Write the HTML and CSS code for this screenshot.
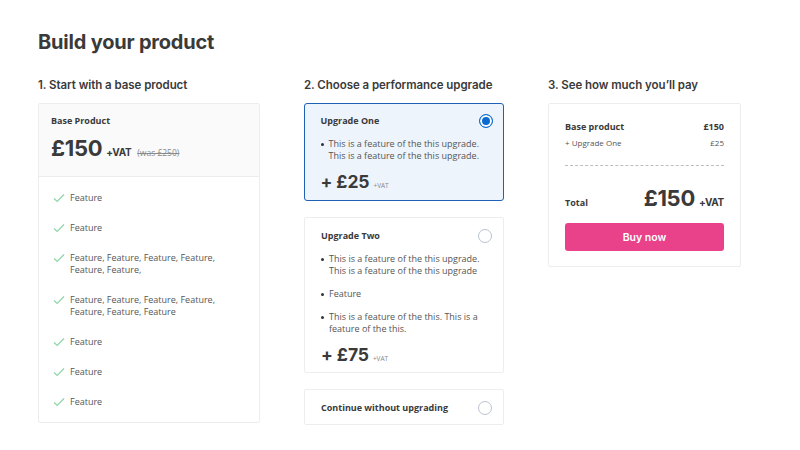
FILE: index.html
```html
<!DOCTYPE html>
<html lang="en">
<head>
<meta charset="utf-8">
<title>Build your product</title>
<link rel="stylesheet" href="styles.css">
</head>
<body>
<main class="page">
  <h1 class="title">Build your product</h1>
  <div class="columns">
    <section class="col">
      <h2 class="step">1. Start with a base product</h2>
      <div class="card base">
        <div class="base-head">
          <div class="label">Base Product</div>
          <div class="price-row">
            <span class="price-big">£150</span>
            <span class="vat">+VAT</span>
            <span class="was">(was £250)</span>
          </div>
        </div>
        <ul class="features">
          <li><svg class="check" viewBox="0 0 12 10" width="12" height="10"><polyline points="1,5.5 4.2,8.5 11,1.5" fill="none" stroke="#8fd4a8" stroke-width="1.2"/></svg><span>Feature</span></li>
          <li><svg class="check" viewBox="0 0 12 10" width="12" height="10"><polyline points="1,5.5 4.2,8.5 11,1.5" fill="none" stroke="#8fd4a8" stroke-width="1.2"/></svg><span>Feature</span></li>
          <li><svg class="check" viewBox="0 0 12 10" width="12" height="10"><polyline points="1,5.5 4.2,8.5 11,1.5" fill="none" stroke="#8fd4a8" stroke-width="1.2"/></svg><span>Feature, Feature, Feature, Feature,<br>Feature, Feature,</span></li>
          <li><svg class="check" viewBox="0 0 12 10" width="12" height="10"><polyline points="1,5.5 4.2,8.5 11,1.5" fill="none" stroke="#8fd4a8" stroke-width="1.2"/></svg><span>Feature, Feature, Feature, Feature,<br>Feature, Feature, Feature</span></li>
          <li><svg class="check" viewBox="0 0 12 10" width="12" height="10"><polyline points="1,5.5 4.2,8.5 11,1.5" fill="none" stroke="#8fd4a8" stroke-width="1.2"/></svg><span>Feature</span></li>
          <li><svg class="check" viewBox="0 0 12 10" width="12" height="10"><polyline points="1,5.5 4.2,8.5 11,1.5" fill="none" stroke="#8fd4a8" stroke-width="1.2"/></svg><span>Feature</span></li>
          <li><svg class="check" viewBox="0 0 12 10" width="12" height="10"><polyline points="1,5.5 4.2,8.5 11,1.5" fill="none" stroke="#8fd4a8" stroke-width="1.2"/></svg><span>Feature</span></li>
        </ul>
      </div>
    </section>

    <section class="col">
      <h2 class="step">2. Choose a performance upgrade</h2>
      <div class="options">
        <div class="card option selected">
          <div class="opt-head">
            <span class="label">Upgrade One</span>
            <span class="radio on"></span>
          </div>
          <ul class="bullets">
            <li>This is a feature of the this upgrade.<br>This is a feature of the this upgrade.</li>
          </ul>
          <div class="opt-price"><span class="plus-price">+ £25</span><span class="small-vat">+VAT</span></div>
        </div>
        <div class="card option">
          <div class="opt-head">
            <span class="label">Upgrade Two</span>
            <span class="radio"></span>
          </div>
          <ul class="bullets">
            <li>This is a feature of the this upgrade.<br>This is a feature of the this upgrade</li>
            <li>Feature</li>
            <li>This is a feature of the this. This is a<br>feature of the this.</li>
          </ul>
          <div class="opt-price"><span class="plus-price">+ £75</span><span class="small-vat">+VAT</span></div>
        </div>
        <div class="card option none">
          <div class="opt-head">
            <span class="label">Continue without upgrading</span>
            <span class="radio"></span>
          </div>
        </div>
      </div>
    </section>

    <section class="col">
      <h2 class="step">3. See how much you’ll pay</h2>
      <div class="card summary">
        <div class="line strong"><span>Base product</span><span>£150</span></div>
        <div class="line sub"><span>+ Upgrade One</span><span>£25</span></div>
        <div class="dash"></div>
        <div class="total">
          <span class="total-label">Total</span>
          <span class="total-price"><span class="price-big">£150</span><span class="vat">+VAT</span></span>
        </div>
        <button class="buy">Buy now</button>
      </div>
    </section>
  </div>
</main>
</body>
</html>
```

FILE: styles.css
```css
* { box-sizing: border-box; }
html, body { margin: 0; padding: 0; background: #ffffff; }
body {
  font-family: "Open Sans", "Noto Sans", sans-serif;
  color: #3b3b3b;
}
.page { padding: 28px 0 0 38px; width: 800px; }
.title {
  font-family: Inter, "Noto Sans", sans-serif;
  font-weight: 700;
  font-size: 20px;
  line-height: 28px;
  letter-spacing: -0.2px;
  color: #3a3a3a;
  margin: 0 0 22px 0;
}
.columns {
  display: grid;
  grid-template-columns: 222px 200px 193px;
  column-gap: 44px;
  align-items: start;
}
.step {
  font-family: Inter, "Noto Sans", sans-serif;
  font-weight: 600;
  font-size: 11.5px;
  line-height: 14px;
  letter-spacing: -0.05px;
  color: #3a3a3a;
  margin: 0 0 11px 0;
}
.card {
  border: 1px solid #ededed;
  border-radius: 2px;
  background: #fff;
}
.label {
  font-weight: 700;
  font-size: 9px;
  line-height: 12px;
  color: #3a3a3a;
}
.base-head {
  background: #fafafa;
  border-bottom: 1px solid #ececec;
  padding: 11px 12px 0 12px;
  height: 73px;
}
.price-row { display: flex; align-items: baseline; margin-top: 7px; }
.price-big {
  font-family: Inter, "Noto Sans", sans-serif;
  font-weight: 700;
  font-size: 22px;
  line-height: 28px;
  letter-spacing: -0.3px;
  color: #3a3a3a;
}
.vat {
  font-family: Inter, "Noto Sans", sans-serif;
  font-weight: 700;
  font-size: 10px;
  margin-left: 4px;
  color: #3a3a3a;
  letter-spacing: -0.3px;
}
.was {
  font-size: 8.5px;
  color: #8a8a8a;
  text-decoration: line-through;
  margin-left: 6px;
}
.features {
  list-style: none;
  margin: 0;
  padding: 15px 12px 14px 14px;
  display: flex;
  flex-direction: column;
  gap: 18px;
}
.features li {
  display: flex;
  align-items: flex-start;
  font-size: 9px;
  line-height: 12px;
  color: #555;
}
.check { flex: none; margin: 1px 5px 0 0; }
.options { display: flex; flex-direction: column; gap: 16px; }
.option { padding: 10px 11px 6px 16px; }
.option.selected {
  border: 1.5px solid #1f62b5;
  border-radius: 3px;
  background: #edf4fc;
  padding: 9px 10px 7px 15.5px;
}
.opt-head {
  display: flex;
  justify-content: space-between;
  align-items: center;
  height: 16px;
}
.radio {
  width: 14px;
  height: 14px;
  border-radius: 50%;
  border: 1px solid #b9c3d0;
  background: #fff;
  flex: none;
}
.radio.on {
  border: 1.5px solid #0b6bd3;
  background: #0b6bd3;
  box-shadow: inset 0 0 0 2px #fff;
}
.bullets {
  list-style: none;
  margin: 9px 0 0 0;
  padding: 0;
  display: flex;
  flex-direction: column;
  gap: 11px;
}
.bullets li {
  position: relative;
  padding-left: 8px;
  font-size: 9px;
  line-height: 12px;
  color: #555;
}
.bullets li::before {
  content: "";
  position: absolute;
  left: 0;
  top: 5px;
  width: 3px;
  height: 3px;
  border-radius: 50%;
  background: #333;
}
.opt-price { display: flex; align-items: baseline; margin-top: 9px; }
.plus-price {
  font-family: Inter, "Noto Sans", sans-serif;
  font-weight: 700;
  font-size: 17.5px;
  line-height: 22px;
  letter-spacing: -0.1px;
  color: #3a3a3a;
}
.small-vat { font-size: 6.5px; color: #888; margin-left: 4px; }
.option.none { padding: 10px 11px 8px 16px; }
.summary { padding: 17px 16px 15px 16px; }
.line { display: flex; justify-content: space-between; }
.line.strong { font-weight: 700; font-size: 9px; line-height: 12px; color: #3a3a3a; }
.line.sub { font-size: 8px; line-height: 12px; color: #555; margin-top: 4px; }
.dash { border-top: 1px dashed #bdbdbd; margin-top: 16px; }
.total {
  display: flex;
  justify-content: space-between;
  align-items: flex-end;
  margin-top: 18px;
}
.total-label { font-weight: 700; font-size: 9px; line-height: 12px; color: #3a3a3a; margin-bottom: 3px; }
.total-price { display: flex; align-items: baseline; }
.buy {
  display: block;
  width: 100%;
  height: 28px;
  margin-top: 11px;
  border: none;
  border-radius: 3px;
  background: #e9428a;
  color: #fff;
  font-family: Inter, "Noto Sans", sans-serif;
  font-weight: 600;
  font-size: 10.5px;
}
```
